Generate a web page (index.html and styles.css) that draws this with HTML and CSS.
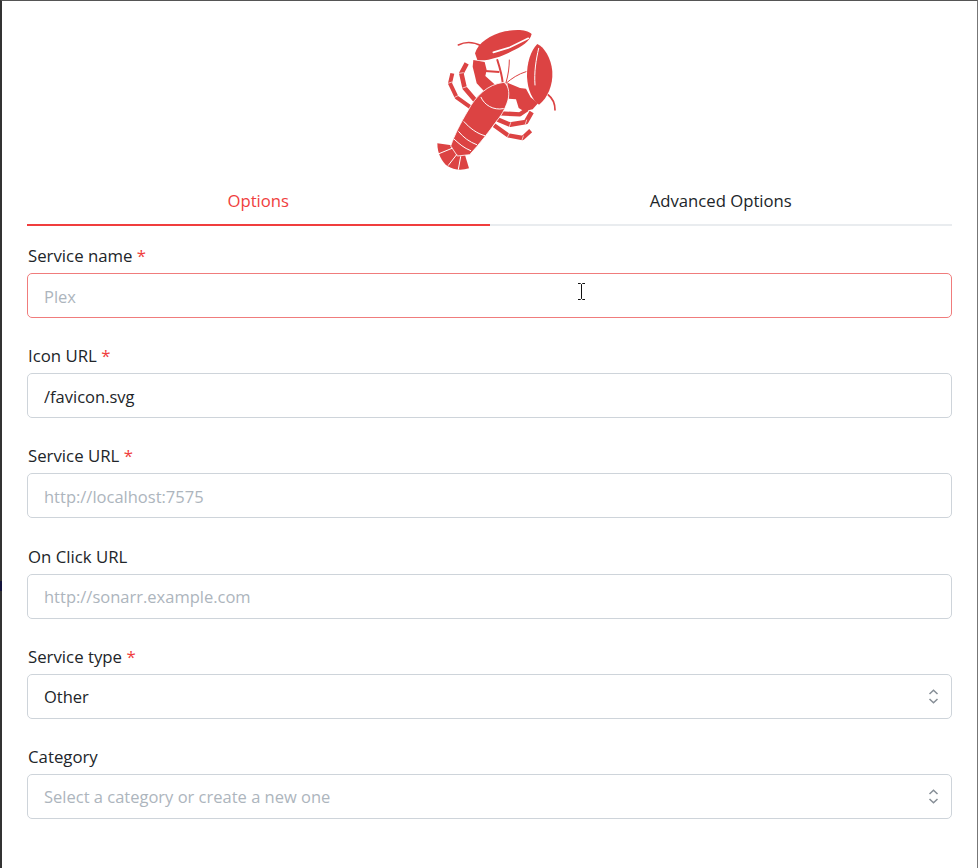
FILE: index.html
```html
<!DOCTYPE html>
<html lang="en">
  <head>
    <meta charset="UTF-8" />
    <meta name="viewport" content="width=device-width, initial-scale=1.0" />
    <title>Add service</title>
    <link rel="stylesheet" href="styles.css">
  </head>
  <body>
    <div class="modal">
      <div class="edge-mark"></div>
      <div class="logo">
        <svg width="161" height="160" viewBox="-33 0 483 480">
          <g fill="none" stroke="#dc4343" stroke-linejoin="round">
            <path stroke-width="12" d="M97 160 L90 190 L110 232 L152 262" />
            <path stroke-width="14" d="M140 130 L124 160 L134 204 L168 244" />
            <path stroke-width="13" d="M222 316 L264 346 L308 354 L332 332" />
            <path stroke-width="14" d="M232 298 L270 314 L318 306 L335 276" />
            <path stroke-width="13" d="M240 280 L300 283 L322 268" />
            <path stroke-width="5" stroke-linecap="round" d="M115 75 C135 65 160 65 185 78" />
            <path stroke-width="5" stroke-linecap="round" d="M385 225 C398 235 405 250 405 270" />
            <path stroke-width="3" stroke-linecap="round" d="M258 190 C275 175 295 162 318 155" />
            <path stroke-width="6" stroke-linecap="round" d="M232 120 C240 145 246 165 248 188" />
            <path stroke-width="3" stroke-linecap="round" d="M258 188 C265 165 268 140 268 120" />
            <path stroke-width="6" d="M195 153 L238 156" />
          </g>
          <g fill="#dc4343">
            <path d="M165 100 C175 68 210 45 255 34 C285 28 320 27 335 42 C330 64 305 80 275 94 C245 109 205 124 172 120 Z" />
            <path d="M352 72 C372 80 394 115 397 155 C399 195 384 232 357 254 C338 240 323 212 321 170 C320 130 332 92 352 72 Z" />
            <path d="M160 120 L194 126 L200 150 L196 168 L232 200 L200 222 L170 190 L164 164 L158 140 Z" />
            <path d="M262 188 L300 204 L318 206 L332 232 L354 250 L338 268 L312 274 L296 264 L288 238 L266 236 Z" />
            <path d="M52 370 L95 376 L135 405 L147 445 C125 452 100 450 82 438 C65 426 52 400 52 370 Z" />
            <path stroke="#fff" stroke-width="2.500" d="M252 187 C264 195 270 215 264 240 C254 272 242 288 230 303 C207 335 177 374 149 404 L112 408 L92 378 C105 342 120 312 145 270 C165 232 202 192 252 187 Z" />
          </g>
          <g fill="none" stroke="#fff" stroke-linecap="round">
            <path stroke-width="5" d="M220 97 L270 82 L325 55" />
            <path stroke-width="3" d="M345 195 C342 155 348 120 356 85" />
            <path stroke-width="3" d="M183 232 C193 255 220 272 250 266" />
            <path stroke-width="3" d="M132 305 C150 325 170 340 194 347" />
            <path stroke-width="3" d="M116 335 C130 352 148 366 170 374" />
            <path stroke-width="3" d="M103 358 C118 372 132 384 152 392" />
            <path stroke-width="3" d="M52 403 L96 385" />
            <path stroke-width="3" d="M85 436 L110 404" />
            <path stroke-width="3" d="M115 448 L122 410" />
            <path stroke-width="2" d="M84 190 L96 186 M104 232 L116 226 M118 160 L130 158 M128 204 L140 200 M262 352 L268 340 M306 360 L310 348 M268 320 L272 308 M316 312 L320 300" />
          </g>
        </svg>
      </div>

      <div class="tabs">
        <div class="tab active">Options</div>
        <div class="tab">Advanced Options</div>
      </div>

      <form class="fields">
        <div class="field">
          <label for="name">Service name <span class="req">*</span></label>
          <div class="control">
            <input class="input focused" type="text" id="name" placeholder="Plex" />
            <svg class="cursor" width="9" height="17" viewBox="0 0 9 17">
              <path d="M1 .5h2.500l1 1 1-1H8M4.500 1.500v14M1 16.500h2.500l1-1 1 1H8" fill="none" stroke="#111" />
            </svg>
          </div>
        </div>
        <div class="field">
          <label for="icon">Icon URL <span class="req">*</span></label>
          <input class="input" type="text" id="icon" value="/favicon.svg" />
        </div>
        <div class="field">
          <label for="url">Service URL <span class="req">*</span></label>
          <input class="input" type="text" id="url" placeholder="http://localhost:7575" />
        </div>
        <div class="field">
          <label for="click">On Click URL</label>
          <input class="input" type="text" id="click" placeholder="http://sonarr.example.com" />
        </div>
        <div class="field">
          <label for="type">Service type <span class="req">*</span></label>
          <div class="control">
            <input class="input" type="text" id="type" value="Other" />
            <svg class="chevrons" width="11" height="15" viewBox="0 0 11 15">
              <path d="M1.500 5 5.500 1.200 9.500 5M1.500 10 5.500 13.800 9.500 10" fill="none" stroke="#868e96" stroke-width="1.500" />
            </svg>
          </div>
        </div>
        <div class="field">
          <label for="category">Category</label>
          <div class="control">
            <input class="input" type="text" id="category" placeholder="Select a category or create a new one" />
            <svg class="chevrons" width="11" height="15" viewBox="0 0 11 15">
              <path d="M1.500 5 5.500 1.200 9.500 5M1.500 10 5.500 13.800 9.500 10" fill="none" stroke="#868e96" stroke-width="1.500" />
            </svg>
          </div>
        </div>
      </form>
    </div>
  </body>
</html>
```

FILE: styles.css
```css
body {
  font-family: "Open Sans", "Noto Sans", Arial, sans-serif;
  background-color: #fff;
  color: #212529;
  margin: 0;
  padding: 0;
}

.modal {
  position: relative;
  box-sizing: border-box;
  height: 868px;
  background: #fff;
  border-top: 1px solid #555;
  border-left: 2px solid #333;
  border-right: 1px solid #777;
  padding: 19px 25px 0;
}

.logo {
  display: flex;
  justify-content: center;
  height: 160px;
}

.tabs {
  display: flex;
  border-bottom: 2px solid #e9ecef;
}

.tab {
  flex: 1;
  text-align: center;
  font-size: 16.700px;
  line-height: 22px;
  padding: 10px 0 12px;
  margin-bottom: -2px;
  border-bottom: 2px solid transparent;
}

.tab.active {
  color: #f03e3e;
  border-bottom-color: #f03e3e;
}

.fields {
  display: flex;
  flex-direction: column;
  gap: 25.200px;
  margin-top: 17px;
}

.field label {
  display: block;
  padding-left: 1px;
  font-size: 16.800px;
  font-weight: 500;
  line-height: 25px;
  margin-bottom: 5px;
}

.req {
  color: #f03e3e;
}

.control {
  position: relative;
}

.input {
  display: block;
  box-sizing: border-box;
  width: 100%;
  height: 45px;
  padding: 1px 16px 0;
  font-family: inherit;
  font-size: 16.500px;
  color: #212529;
  background: #fff;
  border: 1px solid #ced4da;
  border-radius: 5px;
  outline: none;
}

.input::placeholder {
  color: #adb5bd;
  opacity: 1;
}

.input.focused {
  border-color: #f07c7c;
}

.cursor {
  position: absolute;
  left: 550px;
  top: 10px;
}

.chevrons {
  position: absolute;
  right: 13px;
  top: 15px;
}

.edge-mark {
  position: absolute;
  left: -2px;
  top: 580px;
  width: 2px;
  height: 10px;
  background: #14143c;
}
```
